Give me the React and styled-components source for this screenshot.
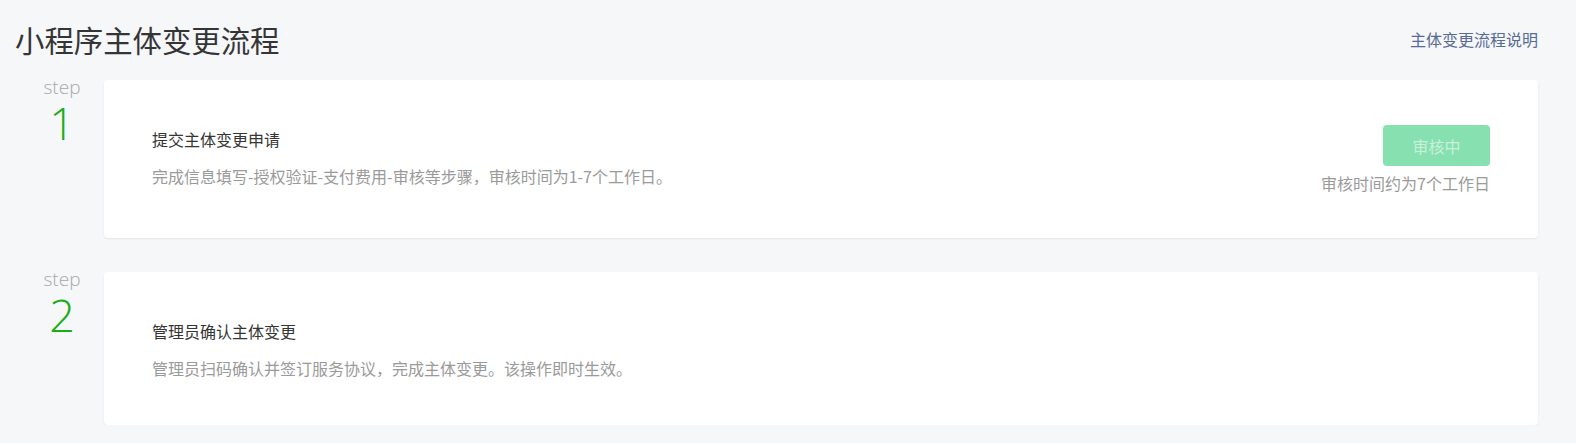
import React from "react";
import styled, { createGlobalStyle } from "styled-components";

const GlobalStyle = createGlobalStyle`
  html, body {
    margin: 0;
    padding: 0;
    background: #f6f7f9;
  }
  body {
    font-family: "Noto Sans CJK SC", "Noto Sans", sans-serif;
    color: #353535;
  }
`;

const steps = [
  {
    num: 1,
    title: "提交主体变更申请",
    desc: "完成信息填写-授权验证-支付费用-审核等步骤，审核时间为1-7个工作日。",
    status: "审核中",
    note: "审核时间约为7个工作日",
  },
  {
    num: 2,
    title: "管理员确认主体变更",
    desc: "管理员扫码确认并签订服务协议，完成主体变更。该操作即时生效。",
  },
];

function App() {
  return (
    <Page>
      <GlobalStyle />
      <Header>
        <Title>小程序主体变更流程</Title>
        <HelpLink href="#">主体变更流程说明</HelpLink>
      </Header>
      <StepList>
        {steps.map((s) => (
          <StepRow key={s.num}>
            <StepLabel>
              <StepWord>step</StepWord>
              <StepNum>{s.num}</StepNum>
            </StepLabel>
            <Card>
              <CardMain>
                <CardTitle>{s.title}</CardTitle>
                <CardDesc>{s.desc}</CardDesc>
              </CardMain>
              {s.status && (
                <CardSide>
                  <StatusButton disabled>{s.status}</StatusButton>
                  <SideNote>{s.note}</SideNote>
                </CardSide>
              )}
            </Card>
          </StepRow>
        ))}
      </StepList>
    </Page>
  );
}

const Page = styled.div`
  padding: 0 38px 0 15px;
`;

const Header = styled.div`
  display: flex;
  justify-content: space-between;
  align-items: center;
  height: 78px;
  padding-bottom: 2px;
`;

const Title = styled.h1`
  margin: 0;
  font-size: 29.4px;
  font-weight: 400;
  line-height: 40px;
  color: #353535;
`;

const HelpLink = styled.a`
  font-size: 16px;
  color: #576b95;
  text-decoration: none;
  line-height: 22px;
`;

const StepList = styled.div`
  display: flex;
  flex-direction: column;
  gap: 34px;
`;

const StepRow = styled.div`
  display: grid;
  grid-template-columns: 89px 1fr;
`;

const StepLabel = styled.div`
  display: flex;
  flex-direction: column;
  align-items: center;
  padding-left: 5px;
  font-family: "Open Sans", "Lato", sans-serif;
  font-weight: 300;
`;

const StepWord = styled.div`
  font-size: 19px;
  line-height: 14px;
  color: #a8a8a8;
`;

const StepNum = styled.div`
  margin-top: 7px;
  font-size: 45px;
  line-height: 44px;
  color: #1aad19;
  font-weight: 300;
`;

const Card = styled.div`
  display: flex;
  justify-content: space-between;
  align-items: flex-start;
  min-height: 153px;
  box-sizing: border-box;
  padding: 45px 48px 44px 48px;
  background: #fff;
  border-radius: 4px;
  box-shadow: 0 1px 2px rgba(0, 0, 0, 0.08);
`;

const CardMain = styled.div`
  padding-top: 3px;
`;

const CardTitle = styled.div`
  font-size: 16px;
  line-height: 22px;
  color: #353535;
`;

const CardDesc = styled.div`
  margin-top: 15px;
  font-size: 16px;
  line-height: 22px;
  color: #9a9a9a;
`;

const CardSide = styled.div`
  display: flex;
  flex-direction: column;
  align-items: flex-end;
`;

const StatusButton = styled.button`
  width: 107px;
  height: 41px;
  border: 0;
  border-radius: 4px;
  background: #86e0b0;
  color: #caf0da;
  font-family: inherit;
  font-size: 16px;
  padding: 0;
`;

const SideNote = styled.div`
  margin-top: 6px;
  font-size: 16px;
  line-height: 22px;
  color: #9a9a9a;
`;

export default App;
